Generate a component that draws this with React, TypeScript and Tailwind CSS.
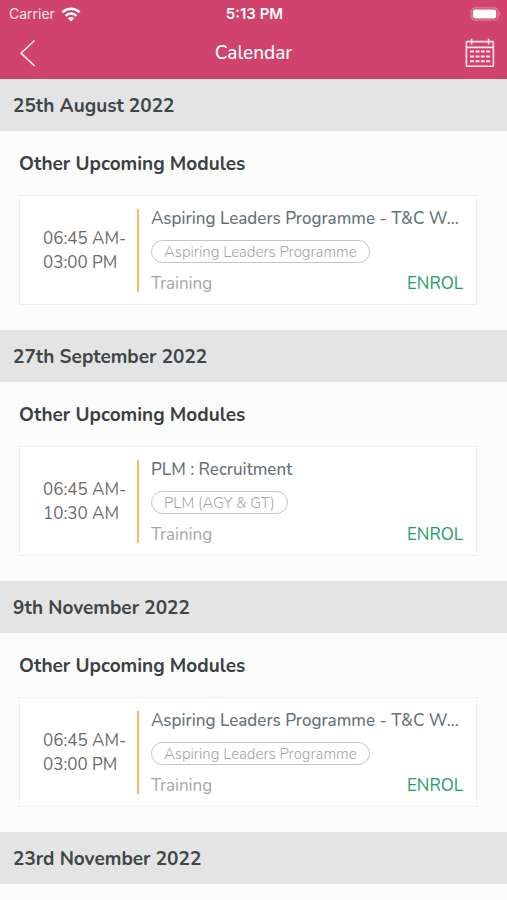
type Session = {
  date: string;
  start?: string;
  end?: string;
  title?: string;
  programme?: string;
};

const sessions: Session[] = [
  {
    date: "25th August 2022",
    start: "06:45 AM-",
    end: "03:00 PM",
    title: "Aspiring Leaders Programme - T&C W...",
    programme: "Aspiring Leaders Programme",
  },
  {
    date: "27th September 2022",
    start: "06:45 AM-",
    end: "10:30 AM",
    title: "PLM : Recruitment",
    programme: "PLM (AGY & GT)",
  },
  {
    date: "9th November 2022",
    start: "06:45 AM-",
    end: "03:00 PM",
    title: "Aspiring Leaders Programme - T&C W...",
    programme: "Aspiring Leaders Programme",
  },
  { date: "23rd November 2022" },
];

function WifiIcon() {
  return (
    <svg width="20" height="15" viewBox="0 0 20 15" fill="none" stroke="white" strokeWidth="2.6" aria-hidden="true">
      <path d="M1.4 5.2C6.2 .6 13.8 .6 18.6 5.2" />
      <path d="M4.6 8.8C7.6 5.8 12.4 5.8 15.4 8.8" />
      <path d="M10 14.4 6.8 11.3C8.6 9.7 11.4 9.7 13.2 11.3Z" fill="white" stroke="none" />
    </svg>
  );
}

function BatteryIcon() {
  return (
    <svg width="31" height="14" viewBox="0 0 31 14" fill="none" aria-hidden="true">
      <rect x="1" y="0.8" width="27" height="12.4" rx="4" stroke="#e07f9d" strokeWidth="1.3" />
      <rect x="2.8" y="2.4" width="23.4" height="9.2" rx="2.4" fill="white" />
      <path d="M29.2 5v4.2c1.6-.6 1.6-3.6 0-4.2Z" fill="#e07f9d" />
    </svg>
  );
}

function CalendarIcon() {
  return (
    <svg width="30" height="30" viewBox="0 0 30 30" fill="none" stroke="#ffe6ee" strokeWidth="1.6" aria-hidden="true">
      <rect x="1.4" y="3.6" width="27" height="24.6" rx="0.8" />
      <path d="M1.4 9.4h27M6.6 .8v5.6M23.6 .8v5.6" />
      <path d="M5 13.6h4M10.5 13.6h4M15.8 13.6h4M21.1 13.6h4M5 18.4h4M10.5 18.4h4M15.8 18.4h4M21.1 18.4h4M5 23.2h4M10.5 23.2h4M15.8 23.2h4M21.1 23.2h4" strokeWidth="2" />
    </svg>
  );
}

function SessionCard({ start, end, title, programme }: Session) {
  return (
    <article className="flex h-[110px] border border-[#efefef] bg-white pt-[13px] pb-3">
      <div className="flex w-[117px] shrink-0 flex-col justify-center pl-[23px] text-[17px] leading-6 text-[#6b6b6d]">
        <span>{start}</span>
        <span>{end}</span>
      </div>
      <div className="w-[2px] shrink-0 bg-[#f9b868]" />
      <div className="flex min-w-0 flex-1 flex-col items-start pr-[13px] pl-3">
        <h3 className="w-full text-[17px] leading-5 font-medium whitespace-nowrap text-[#66727a]">{title}</h3>
        <span className="mt-[11px] flex h-[23px] items-center rounded-full border border-[#c3c5c8] px-3 text-[15px] leading-5 font-light whitespace-nowrap text-[#a1a4a8]">
          {programme}
        </span>
        <div className="mt-[13px] flex w-full items-center justify-between text-[17px] leading-4">
          <span className="text-[#a4a7aa]">Training</span>
          <button type="button" className="text-[#229b63]">ENROL</button>
        </div>
      </div>
    </article>
  );
}

export default function App() {
  return (
    <div className="min-h-screen bg-[#fcfcfc] font-['Nunito','Open_Sans',sans-serif]">
      <header className="bg-[#cf436d] text-white">
        <div className="grid h-7 grid-cols-3 items-center pr-[6px] pl-2 font-['Inter',sans-serif] text-[14px] leading-5">
          <div className="flex items-center gap-[6px] pl-px text-[#ffe6ee]">
            <span>Carrier</span>
            <WifiIcon />
          </div>
          <span className="text-center text-[15px] font-semibold">5:13 PM</span>
          <div className="flex justify-end">
            <BatteryIcon />
          </div>
        </div>
        <nav className="grid h-[51px] grid-cols-3 items-center px-3 pb-[2px]">
          <button type="button" aria-label="Back" className="w-fit pl-[7px]">
            <svg width="18" height="28" viewBox="0 0 18 28" fill="none" stroke="#ffe6ee" strokeWidth="1.6" aria-hidden="true">
              <path d="M15.5 1.5 2 14.2l13.5 12.6" />
            </svg>
          </button>
          <h1 className="text-center text-[19px] leading-6 font-medium">Calendar</h1>
          <button type="button" aria-label="Open calendar" className="w-fit justify-self-end">
            <CalendarIcon />
          </button>
        </nav>
      </header>
      <main>
        {sessions.map((session) => (
          <section key={session.date}>
            <h2 className="flex h-[52px] items-center bg-[#e4e4e4] px-[13px] pt-[2px] text-[19px] leading-6 font-bold text-[#414649]">
              {session.date}
            </h2>
            {session.title && (
              <div className="pt-[21px] pr-[30px] pb-[25px] pl-[19px]">
                <h3 className="mb-[19px] text-[19px] leading-6 font-bold text-[#3b4043]">Other Upcoming Modules</h3>
                <SessionCard {...session} />
              </div>
            )}
          </section>
        ))}
      </main>
    </div>
  );
}
